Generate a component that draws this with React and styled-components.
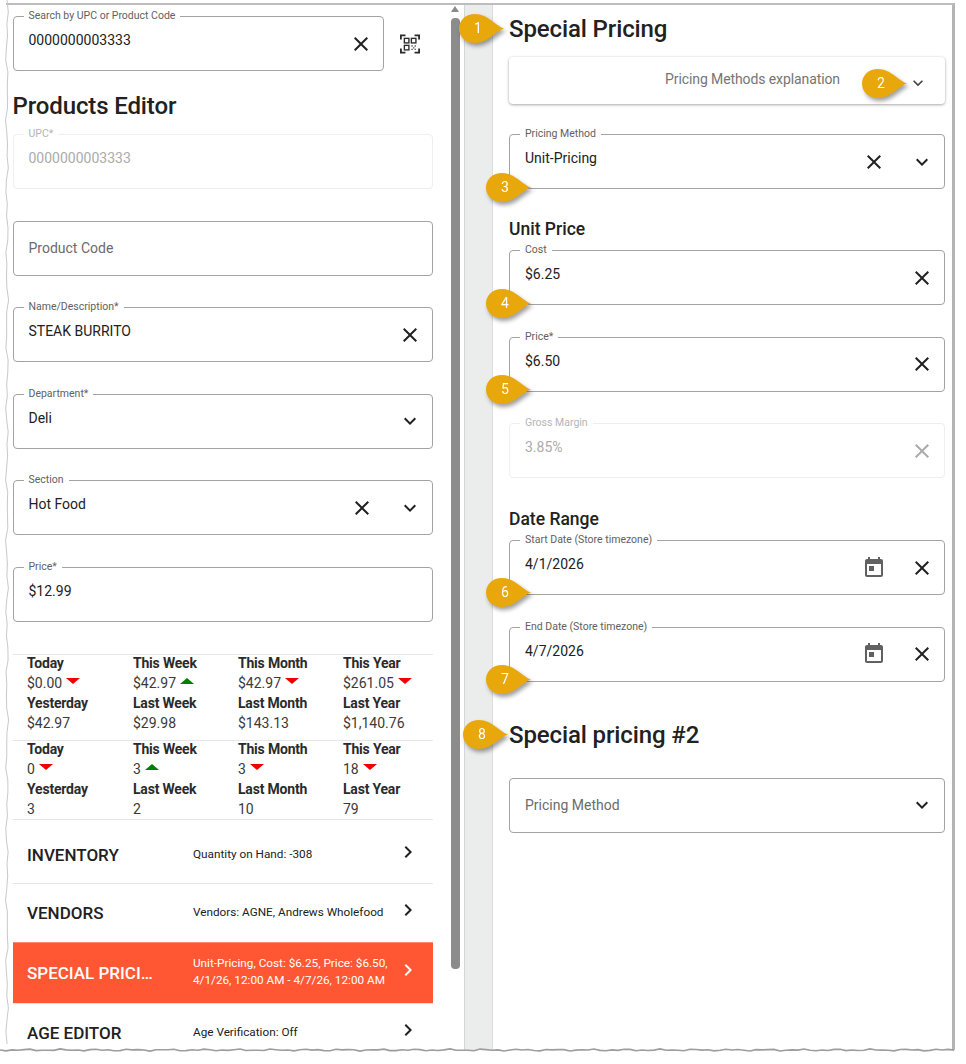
import React from "react";
import styled, { createGlobalStyle } from "styled-components";

const GlobalStyle = createGlobalStyle`
  html, body {
    margin: 0;
    padding: 0;
    background: #fff;
  }
  body {
    font-family: Roboto, "Liberation Sans", sans-serif;
    color: #212121;
  }
`;

const Page = styled.div`
  position: relative;
  width: 966px;
  height: 1064px;
  overflow: hidden;
  background: #fff;
`;

const Frame = styled.div`
  margin: 3px 0 0 6px;
  width: 949px;
  height: 1047px;
  box-sizing: border-box;
  display: flex;
  overflow: hidden;
  border-top: 2px solid #bdbdbd;
  border-right: 3px solid #b4b4b4;
`;

const LeftPane = styled.div`
  width: 443px;
  flex: none;
  box-sizing: border-box;
  padding: 11px 16px 0 6.5px;
`;

const Scrollbar = styled.div`
  width: 15px;
  flex: none;
  display: flex;
  flex-direction: column;
  align-items: center;
  padding-right: 3px;
  box-sizing: border-box;
`;

const ScrollArrow = styled.div`
  margin-top: 1px;
  width: 0;
  height: 0;
  border-left: 4px solid transparent;
  border-right: 4px solid transparent;
  border-bottom: 6px solid #8a8a8a;
`;

const ScrollThumb = styled.div`
  margin-top: 6px;
  width: 9px;
  height: 951px;
  border-radius: 4px;
  background: #8c8c8c;
`;

const Gutter = styled.div`
  width: 29px;
  flex: none;
  box-sizing: border-box;
  background: #ebeded;
  border-left: 1px solid #d4d6d6;
  border-right: 1px solid #dcdede;
`;

const RightPane = styled.div`
  flex: 1;
  min-width: 0;
  box-sizing: border-box;
  padding: 10px 7px 0 16px;
`;

const SearchRow = styled.div`
  display: flex;
  align-items: center;
`;

const ScanButton = styled.div`
  width: 49px;
  flex: none;
  display: flex;
  justify-content: center;
  padding-left: 3px;
  box-sizing: border-box;
`;

const PageTitle = styled.h1`
  margin: ${(p) => p.$top}px 0 ${(p) => p.$bottom}px;
  font-size: 24px;
  line-height: 28px;
  font-weight: 500;
  letter-spacing: -0.12px;
  color: #212121;
`;

const SubTitle = styled.h2`
  margin: ${(p) => p.$top}px 0 10px;
  font-size: 17.5px;
  line-height: 22px;
  font-weight: 500;
  color: #212121;
`;

const FieldStack = styled.div`
  display: flex;
  flex-direction: column;
  gap: 31.5px;
`;

const FieldBox = styled.div`
  position: relative;
  flex: 1 0 auto;
  height: 55px;
  box-sizing: border-box;
  display: flex;
  align-items: center;
  padding: 0 10px 0 15px;
  border: 1px solid ${(p) => (p.$disabled ? "#eeeeee" : "#a3a3a3")};
  border-radius: 4px;
  background: #fff;
`;

const FieldLabel = styled.span`
  position: absolute;
  left: 10px;
  top: -8px;
  padding: 0 5px;
  background: #fff;
  font-size: 10.5px;
  line-height: 13px;
  white-space: nowrap;
  color: ${(p) => (p.$disabled ? "#b5b5b5" : "#616161")};
`;

const FieldValue = styled.span`
  flex: 1;
  min-width: 0;
  font-size: 14px;
  line-height: 18px;
  margin-bottom: ${(p) => (p.$placeholder ? 0 : 7)}px;
  color: ${(p) => {
    if (p.$disabled) return "#ababab";
    return p.$placeholder ? "#6b6b6b" : "#212121";
  }};
`;

const FieldIcons = styled.div`
  display: flex;
  gap: 24px;
  color: #212121;
`;

const Glyph = styled.svg`
  display: block;
  flex: none;
  width: ${(p) => p.$size || 24}px;
  height: ${(p) => p.$size || 24}px;
  fill: currentColor;
  color: ${(p) => p.$color || "inherit"};
`;

const StatsGroup = styled.div`
  display: grid;
  grid-template-columns: 106px repeat(3, 105px);
  row-gap: 4px;
  padding: 0 0 ${(p) => p.$tail}px 14.5px;
  border-top: 1px solid #e6e6e6;
  margin-top: ${(p) => p.$top || 0}px;
`;

const StatLabel = styled.div`
  font-size: 14px;
  line-height: 16px;
  font-weight: 700;
  letter-spacing: -0.2px;
  color: #2b2b2b;
`;

const StatValue = styled.div`
  display: flex;
  align-items: center;
  gap: 4px;
  font-size: 14px;
  line-height: 16px;
  color: #3a3a3a;
`;

const Trend = styled.span`
  width: 0;
  height: 0;
  margin-bottom: 3px;
  border-left: 7px solid transparent;
  border-right: 7px solid transparent;
  ${(p) =>
    p.$up ? "border-bottom: 6px solid #008000;" : "border-top: 6px solid #f00000;"}
`;

const SectionRow = styled.div`
  height: ${(p) => p.$height}px;
  box-sizing: border-box;
  display: flex;
  align-items: center;
  padding: ${(p) => p.$pad || 0}px 0 0 14.5px;
  border-top: 1px solid ${(p) => (p.$active ? "#ff8a6d" : "#e6e6e6")};
  background: ${(p) => (p.$active ? "#ff5733" : "#fff")};
  color: ${(p) => (p.$active ? "#fff" : "#212121")};
`;

const SectionTitle = styled.div`
  width: 128px;
  flex: none;
  margin-right: 38px;
  font-size: 17px;
  line-height: 22px;
  font-weight: 500;
  white-space: nowrap;
  overflow: hidden;
  text-overflow: ellipsis;
`;

const SectionSummary = styled.div`
  width: 203px;
  flex: none;
  margin-bottom: 2px;
  font-size: 11.75px;
  line-height: 17px;
`;

const SectionChevron = styled.div`
  margin-bottom: 6px;
`;

const ExplainBar = styled.div`
  height: 47px;
  margin-bottom: 30px;
  box-sizing: border-box;
  display: flex;
  align-items: center;
  justify-content: flex-end;
  padding-right: 17px;
  border-radius: 4px;
  background: #fff;
  box-shadow: 0 1px 3px rgba(0, 0, 0, 0.32), 0 0 2px rgba(0, 0, 0, 0.08);
`;

const ExplainText = styled.span`
  margin: 0 68px 3px 0;
  font-size: 14px;
  letter-spacing: -0.1px;
  color: #757575;
`;

const ExplainChevron = styled.div`
  margin-top: 5px;
  color: #424242;
`;

const Callout = styled.div`
  position: absolute;
  left: ${(p) => p.$x}px;
  top: ${(p) => p.$y}px;
  width: 45px;
  height: 29px;
  filter: drop-shadow(2px 3px 2px rgba(0, 0, 0, 0.38));
`;

const CalloutShape = styled.svg`
  position: absolute;
  inset: 0;
  width: 45px;
  height: 29px;
  fill: #e8a80c;
`;

const CalloutNumber = styled.span`
  position: absolute;
  left: 0;
  top: 0;
  width: 38px;
  font-size: 14px;
  line-height: 29px;
  text-align: center;
  color: #fff;
`;

const TornEdge = styled.svg`
  position: absolute;
  left: 0;
  top: 0;
  width: 966px;
  height: 1064px;
  pointer-events: none;
  fill: none;
`;

const CLOSE = "M19 6.41 17.59 5 12 10.59 6.41 5 5 6.41 10.59 12 5 17.59 6.41 19 12 13.41 17.59 19 19 17.59 13.41 12z";
const EXPAND = "M16.59 8.59 12 13.17 7.41 8.59 6 10l6 6 6-6z";
const RIGHT = "M10 6 8.59 7.41 13.17 12l-4.58 4.59L10 18l6-6z";
const TODAY = "M19 3h-1V1h-2v2H8V1H6v2H5c-1.11 0-1.99.9-1.99 2L3 19c0 1.1.89 2 2 2h14c1.1 0 2-.9 2-2V5c0-1.1-.9-2-2-2zm0 16H5V8h14v11zM7 10h5v5H7z";

function Icon({ d, size, color }) {
  return (
    <Glyph viewBox="0 0 24 24" $size={size} $color={color}>
      <path d={d} />
    </Glyph>
  );
}

function ScanIcon() {
  return (
    <svg width="20" height="20" viewBox="0 0 22 22" fill="none" stroke="#2b2b2b">
      <path d="M1 6V1.500H6M16 1.500H21V6M1 16V20.500H6M16 20.500H21V16" strokeWidth="2" />
      <rect x="4.800" y="4.800" width="5" height="5" strokeWidth="1.500" />
      <rect x="12.500" y="4.800" width="5" height="5" strokeWidth="1.500" />
      <rect x="4.800" y="12.500" width="5" height="5" strokeWidth="1.500" />
      <path d="M12.500 12.500h1.500v1.500h-1.500zM16 12.500h1.500v1.500H16zM14.300 14.500h1.500v1.500h-1.500zM12.500 16.300h1.500v1.400h-1.500zM16 16.300h1.500v1.400H16z" fill="#555" stroke="none" />
    </svg>
  );
}

function Field({ label, value, placeholder, disabled, icons = [] }) {
  return (
    <FieldBox $disabled={disabled}>
      {label && <FieldLabel $disabled={disabled}>{label}</FieldLabel>}
      <FieldValue $placeholder={placeholder} $disabled={disabled}>
        {value || placeholder}
      </FieldValue>
      <FieldIcons>
        {icons.map((d) => (
          <Icon
            key={d}
            d={d}
            color={disabled ? "#ababab" : d === TODAY ? "#616161" : undefined}
          />
        ))}
      </FieldIcons>
    </FieldBox>
  );
}

function Stats({ cells, tail, top }) {
  return (
    <StatsGroup $tail={tail} $top={top}>
      {cells.map((cell, i) =>
        cell.label ? (
          <StatLabel key={i}>{cell.label}</StatLabel>
        ) : (
          <StatValue key={i}>
            {cell.value}
            {cell.trend && <Trend $up={cell.trend === "up"} />}
          </StatValue>
        )
      )}
    </StatsGroup>
  );
}

const l = (label) => ({ label });
const v = (value, trend) => ({ value, trend });

const salesCells = [
  l("Today"), l("This Week"), l("This Month"), l("This Year"),
  v("$0.00", "down"), v("$42.97", "up"), v("$42.97", "down"), v("$261.05", "down"),
  l("Yesterday"), l("Last Week"), l("Last Month"), l("Last Year"),
  v("$42.97"), v("$29.98"), v("$143.13"), v("$1,140.76"),
];

const unitCells = [
  l("Today"), l("This Week"), l("This Month"), l("This Year"),
  v("0", "down"), v("3", "up"), v("3", "down"), v("18", "down"),
  l("Yesterday"), l("Last Week"), l("Last Month"), l("Last Year"),
  v("3"), v("2"), v("10"), v("79"),
];

const sections = [
  { title: "INVENTORY", summary: "Quantity on Hand: -308", height: 64, pad: 8 },
  { title: "VENDORS", summary: "Vendors: AGNE, Andrews Wholefood", height: 59, pad: 1 },
  {
    title: "SPECIAL PRICING",
    summary: "Unit-Pricing, Cost: $6.25, Price: $6.50, 4/1/26, 12:00 AM - 4/7/26, 12:00 AM",
    height: 61,
    active: true,
  },
  { title: "AGE EDITOR", summary: "Age Verification: Off", height: 60 },
];

const callouts = [
  [1, 459, 14],
  [2, 862, 69],
  [3, 486, 173],
  [4, 486, 289],
  [5, 486, 375],
  [6, 486, 578],
  [7, 486, 665],
  [8, 463, 720],
];

// wobbly torn edge of the screenshot, same seed every render
function wobble(count, step, base, amp) {
  let out = "";
  for (let i = 0; i <= count; i++) {
    const n = Math.sin(i * 1.7) * Math.cos(i * 0.63) * amp;
    out += `${i * step},${(base + n).toFixed(1)} `;
  }
  return out;
}

function Torn() {
  const left = wobble(87, 12, 7, 1.6)
    .trim()
    .split(" ")
    .map((pair) => pair.split(",").reverse().join(","))
    .join(" ");
  return (
    <TornEdge viewBox="0 0 966 1064">
      <polyline points={left} stroke="#c9c9c9" strokeWidth="1" />
      <polyline points={wobble(159, 6, 1050, 1.1)} stroke="#9d9d9d" strokeWidth="1.6" />
    </TornEdge>
  );
}

export default function App() {
  return (
    <Page>
      <GlobalStyle />
      <Frame>
        <LeftPane>
          <SearchRow>
            <Field label="Search by UPC or Product Code" value="0000000003333" icons={[CLOSE]} />
            <ScanButton>
              <ScanIcon />
            </ScanButton>
          </SearchRow>
          <PageTitle $top={21} $bottom={14}>Products Editor</PageTitle>
          <FieldStack>
            <Field label="UPC*" value="0000000003333" disabled />
            <Field placeholder="Product Code" />
            <Field label="Name/Description*" value="STEAK BURRITO" icons={[CLOSE]} />
            <Field label="Department*" value="Deli" icons={[EXPAND]} />
            <Field label="Section" value="Hot Food" icons={[CLOSE, EXPAND]} />
            <Field label="Price*" value="$12.99" />
          </FieldStack>
          <Stats cells={salesCells} tail={9} top={32} />
          <Stats cells={unitCells} tail={2} />
          {sections.map((s) => (
            <SectionRow key={s.title} $height={s.height} $pad={s.pad} $active={s.active}>
              <SectionTitle>{s.title}</SectionTitle>
              <SectionSummary>{s.summary}</SectionSummary>
              <SectionChevron>
                <Icon d={RIGHT} />
              </SectionChevron>
            </SectionRow>
          ))}
        </LeftPane>
        <Scrollbar>
          <ScrollArrow />
          <ScrollThumb />
        </Scrollbar>
        <Gutter />
        <RightPane>
          <PageTitle $top={0} $bottom={14}>Special Pricing</PageTitle>
          <ExplainBar>
            <ExplainText>Pricing Methods explanation</ExplainText>
            <ExplainChevron>
              <Icon d={EXPAND} size={20} />
            </ExplainChevron>
          </ExplainBar>
          <Field label="Pricing Method" value="Unit-Pricing" icons={[CLOSE, EXPAND]} />
          <SubTitle $top={29}>Unit Price</SubTitle>
          <FieldStack>
            <Field label="Cost" value="$6.25" icons={[CLOSE]} />
            <Field label="Price*" value="$6.50" icons={[CLOSE]} />
            <Field label="Gross Margin" value="3.85%" disabled icons={[CLOSE]} />
          </FieldStack>
          <SubTitle $top={30}>Date Range</SubTitle>
          <FieldStack>
            <Field label="Start Date (Store timezone)" value="4/1/2026" icons={[TODAY, CLOSE]} />
            <Field label="End Date (Store timezone)" value="4/7/2026" icons={[TODAY, CLOSE]} />
          </FieldStack>
          <PageTitle $top={39} $bottom={29}>Special pricing #2</PageTitle>
          <Field placeholder="Pricing Method" icons={[EXPAND]} />
        </RightPane>
      </Frame>
      <Torn />
      {callouts.map(([n, x, y]) => (
        <Callout key={n} $x={x} $y={y}>
          <CalloutShape viewBox="0 0 45 29">
            <path d="M45 14.500C38 16 29 29 16 29C7 29 0 23 0 14.500C0 6 7 0 16 0C29 0 38 13 45 14.500Z" />
          </CalloutShape>
          <CalloutNumber>{n}</CalloutNumber>
        </Callout>
      ))}
    </Page>
  );
}
